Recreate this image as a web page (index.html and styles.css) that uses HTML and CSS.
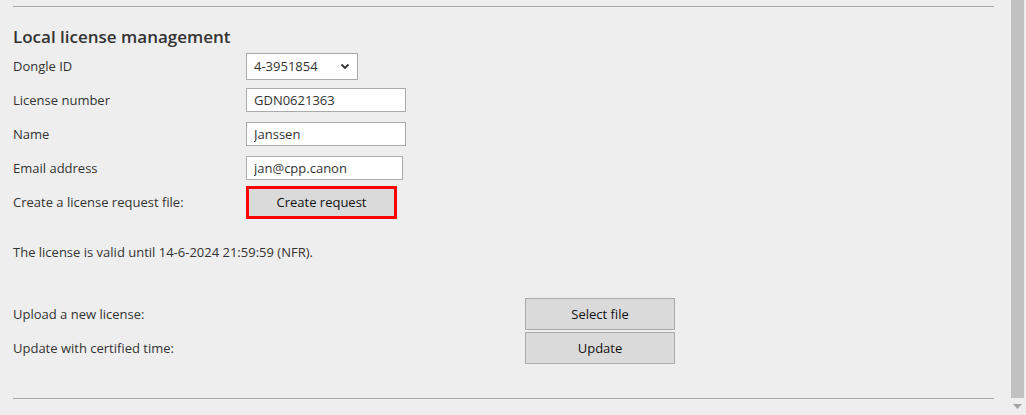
FILE: index.html
```html
<!DOCTYPE html>
<html>
<head>
<meta charset="utf-8">
<link rel="stylesheet" href="styles.css">
</head>
<body>
<div class="page">
  <main class="main">
    <div class="rule rule-top"></div>
    <h2 class="title">Local license management</h2>
    <div class="form">
      <label class="label">Dongle ID</label>
      <div class="cell">
        <div class="select">
          <span>4-3951854</span>
          <svg class="chev" width="10" height="7" viewBox="0 0 10 7"><path d="M1.5 1.5 L5 5 L8.5 1.5" fill="none" stroke="#333" stroke-width="1.8"/></svg>
        </div>
      </div>
      <label class="label">License number</label>
      <div class="cell"><input class="field w160" type="text" value="GDN0621363"></div>
      <label class="label">Name</label>
      <div class="cell"><input class="field w160" type="text" value="Janssen"></div>
      <label class="label">Email address</label>
      <div class="cell"><input class="field w157" type="text" value="jan@cpp.canon"></div>
      <label class="label">Create a license request file:</label>
      <div class="cell"><button class="btn btn-focus">Create request</button></div>
    </div>
    <p class="valid">The license is valid until 14-6-2024 21:59:59 (NFR).</p>
    <div class="actions">
      <span class="label">Upload a new license:</span>
      <button class="btn btn-wide">Select file</button>
      <span class="label">Update with certified time:</span>
      <button class="btn btn-wide">Update</button>
    </div>
    <div class="rule rule-bottom"></div>
  </main>
  <aside class="scroll">
    <div class="thumb"></div>
    <div class="arrow"><svg width="9" height="5" viewBox="0 0 9 5"><path d="M0 0 H9 L4.5 5 Z" fill="#a3a3a3"/></svg></div>
  </aside>
</div>
</body>
</html>
```

FILE: styles.css
```css
html, body {
  margin: 0;
  padding: 0;
  background: #eeeeee;
}
body {
  font-family: "Open Sans", "Noto Sans", sans-serif;
  font-size: 13px;
  color: #333333;
}
.page {
  display: flex;
  height: 415px;
  overflow: hidden;
}
.main {
  flex: 1;
  padding-left: 13px;
}
.rule {
  width: 981px;
  height: 1px;
  background: #aaaaaa;
}
.rule-top {
  margin-top: 6px;
}
.title {
  margin: 19px 0 0 0;
  font-size: 17px;
  font-weight: 600;
  line-height: 22px;
  color: #333333;
}
.form {
  display: grid;
  grid-template-columns: 233px auto;
  grid-auto-rows: 34px;
  align-items: center;
  margin-top: 1px;
}
.label {
  line-height: 18px;
}
.cell {
  display: flex;
  align-items: center;
}
.select {
  box-sizing: border-box;
  width: 112px;
  height: 27px;
  background: #ffffff;
  border: 1px solid #aaaaaa;
  display: flex;
  align-items: center;
  justify-content: space-between;
  padding: 0 7px 0 7px;
}
.field {
  box-sizing: border-box;
  height: 24px;
  border: 1px solid #aaaaaa;
  background: #ffffff;
  font-family: inherit;
  font-size: 13px;
  color: #333333;
  padding: 0 7px;
  margin: 0;
  outline: none;
}
.w160 { width: 160px; }
.w157 { width: 157px; }
.btn {
  box-sizing: border-box;
  font-family: inherit;
  font-size: 13px;
  color: #111111;
  background: #dadada;
  border: 1px solid #aaaaaa;
  margin: 0;
  padding: 0;
  cursor: pointer;
}
.btn-focus {
  width: 151px;
  height: 33px;
  border: 3px solid #ff0000;
}
.valid {
  margin: 24px 0 0 0;
  line-height: 18px;
}
.actions {
  display: grid;
  grid-template-columns: 512px 150px;
  row-gap: 2px;
  align-items: center;
  margin-top: 37px;
}
.btn-wide {
  width: 150px;
  height: 32px;
}
.rule-bottom {
  margin-top: 34px;
}
.scroll {
  width: 13px;
  margin-right: 2px;
  display: flex;
  flex-direction: column;
}
.thumb {
  height: 398px;
  background: #c1c1c1;
}
.arrow {
  display: flex;
  justify-content: center;
  padding-top: 6px;
}
```
